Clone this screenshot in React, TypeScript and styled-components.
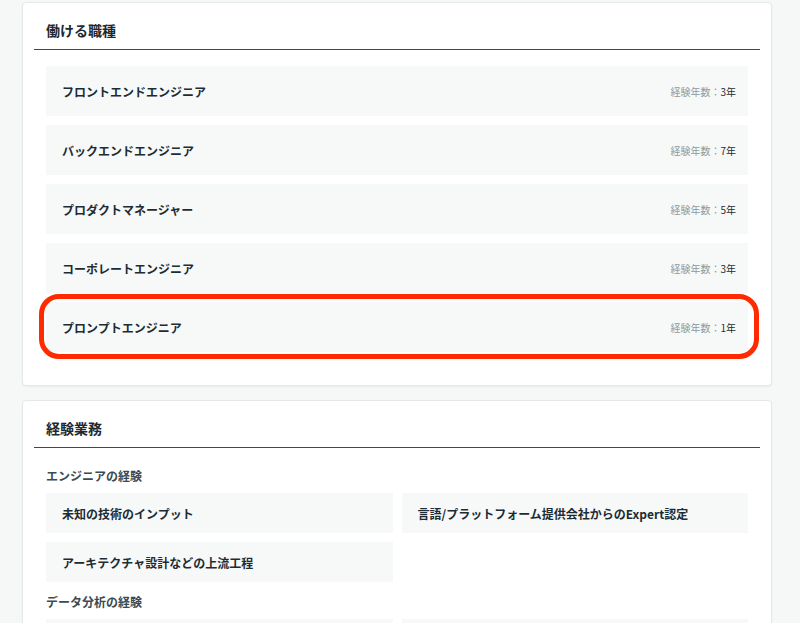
import React, { FC } from 'react';
import styled, { createGlobalStyle } from 'styled-components';

const GlobalStyle = createGlobalStyle`
  * { box-sizing: border-box; }
  body {
    margin: 0;
    background: #f6f7f7;
    font-family: "Noto Sans CJK JP", "Noto Sans", sans-serif;
    color: #1d2c33;
  }
`;

type Job = { id: number; name: string; years: number; highlighted?: boolean };

type Group = { id: number; title: string; items: string[] };

const jobs: Job[] = [
  { id: 1, name: 'フロントエンドエンジニア', years: 3 },
  { id: 2, name: 'バックエンドエンジニア', years: 7 },
  { id: 3, name: 'プロダクトマネージャー', years: 5 },
  { id: 4, name: 'コーポレートエンジニア', years: 3 },
  { id: 5, name: 'プロンプトエンジニア', years: 1, highlighted: true },
];

const groups: Group[] = [
  {
    id: 1,
    title: 'エンジニアの経験',
    items: ['未知の技術のインプット', '言語/プラットフォーム提供会社からのExpert認定', 'アーキテクチャ設計などの上流工程'],
  },
  { id: 2, title: 'データ分析の経験', items: ['', ''] },
];

const Page = styled.div`
  display: flex;
  flex-direction: column;
  gap: 14px;
  padding: 2px 28px 0 22px;
`;

const Card = styled.section`
  background: #fff;
  border: 1px solid #e4e8e9;
  border-radius: 4px;
  box-shadow: 0 1px 2px rgba(0, 0, 0, 0.05);
  padding: 0 11px 33px;
`;

const CardHeader = styled.h2`
  margin: 0;
  padding: 17px 12px 8px;
  font-size: 14px;
  line-height: 21px;
  font-weight: 700;
  color: #1b2a31;
  border-bottom: 1px solid #3b4a50;
`;

const CardBody = styled.div<{ $top: number }>`
  padding: ${p => p.$top}px 12px 0;
`;

const JobList = styled.ul`
  list-style: none;
  margin: 0;
  padding: 0;
  display: flex;
  flex-direction: column;
  gap: 9px;
`;

const JobRow = styled.li`
  position: relative;
  display: flex;
  align-items: center;
  justify-content: space-between;
  height: 50px;
  padding: 0 12px 0 16px;
  background: #f7f9f9;
`;

const JobName = styled.span`
  font-size: 12px;
  font-weight: 700;
  color: #1d2c33;
`;

const Years = styled.span`
  font-size: 10px;
  color: #8d999e;

  > b {
    font-weight: 400;
    color: #1d2c33;
  }
`;

const Highlight = styled.span`
  position: absolute;
  top: -8px;
  left: -7px;
  right: -11px;
  bottom: -7px;
  border: 5px solid #ff2a00;
  border-radius: 20px;
  pointer-events: none;
`;

const GroupBlock = styled.div`
  & + & {
    margin-top: 10px;
  }
`;

const GroupTitle = styled.h3`
  margin: 0 0 7px;
  font-size: 12px;
  line-height: 20px;
  font-weight: 700;
  color: #3c4b52;
`;

const ItemGrid = styled.div`
  display: grid;
  grid-template-columns: 1fr 1fr;
  gap: 9px;
`;

const Item = styled.div`
  display: flex;
  align-items: center;
  height: 40px;
  padding: 0 16px;
  background: #f7f9f9;
  font-size: 12px;
  font-weight: 700;
  color: #1d2c33;
`;

const JobsCard: FC<{ items: Job[] }> = ({ items }) => (
  <Card>
    <CardHeader>働ける職種</CardHeader>
    <CardBody $top={16}>
      <JobList>
        {items.map(job => (
          <JobRow key={job.id}>
            <JobName>{job.name}</JobName>
            <Years>
              経験年数：<b>{job.years}年</b>
            </Years>
            {job.highlighted && <Highlight />}
          </JobRow>
        ))}
      </JobList>
    </CardBody>
  </Card>
);

const ExperienceCard: FC<{ items: Group[] }> = ({ items }) => (
  <Card>
    <CardHeader>経験業務</CardHeader>
    <CardBody $top={18}>
      {items.map(group => (
        <GroupBlock key={group.id}>
          <GroupTitle>{group.title}</GroupTitle>
          <ItemGrid>
            {group.items.map((item, i) => (
              <Item key={i}>{item}</Item>
            ))}
          </ItemGrid>
        </GroupBlock>
      ))}
    </CardBody>
  </Card>
);

const App: FC = () => (
  <>
    <GlobalStyle />
    <Page>
      <JobsCard items={jobs} />
      <ExperienceCard items={groups} />
    </Page>
  </>
);

export default App;
